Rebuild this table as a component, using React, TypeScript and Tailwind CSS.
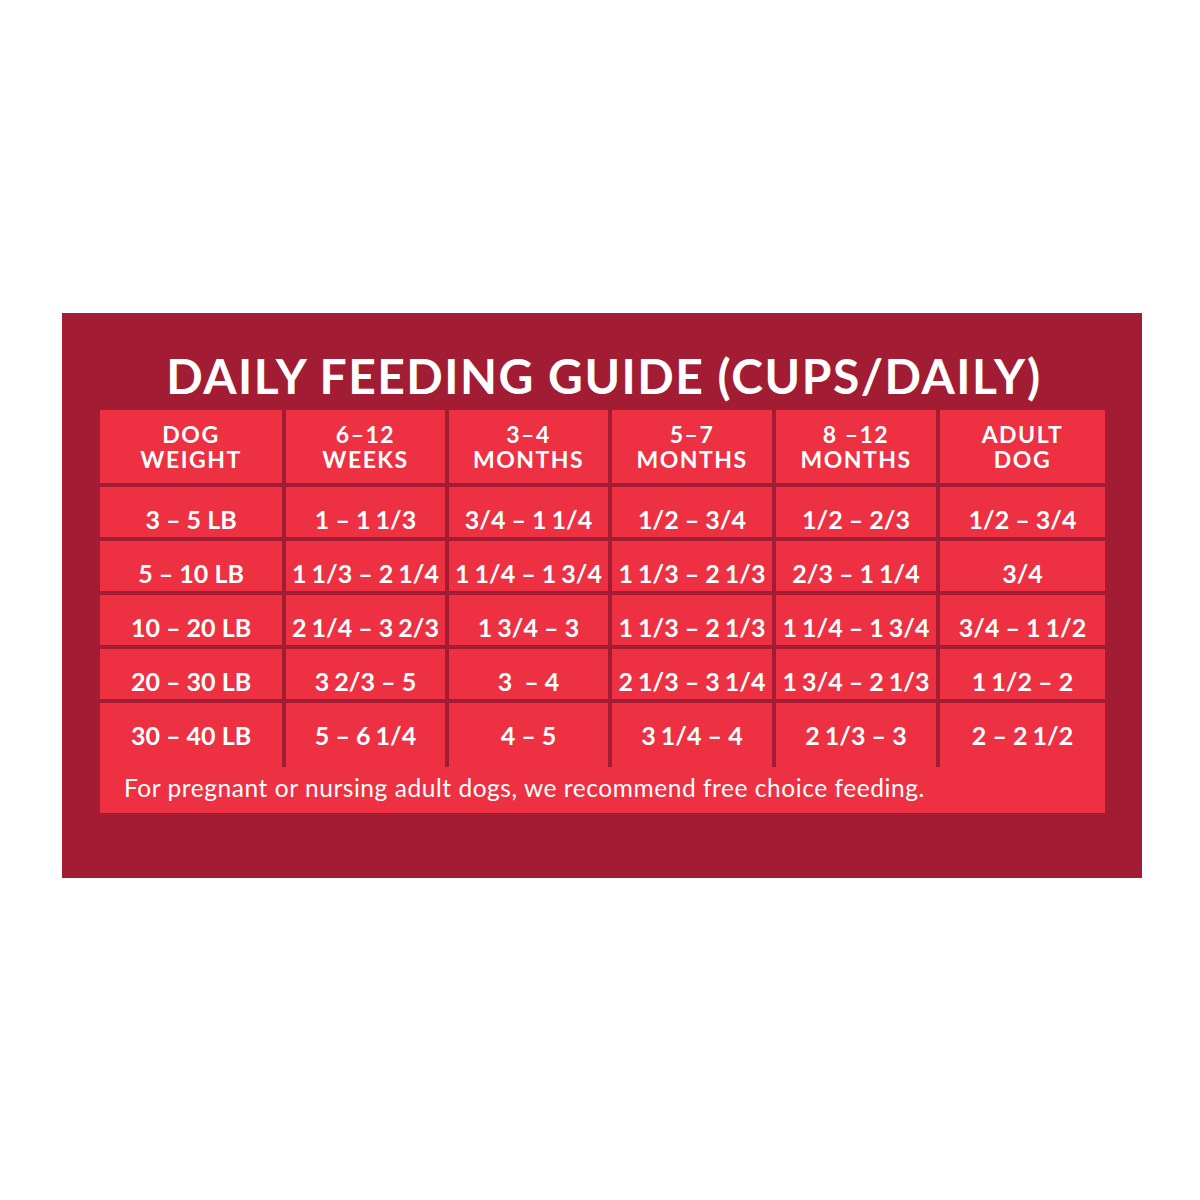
import React from "react";

const headers = [
  ["DOG", "WEIGHT"],
  ["6–12", "WEEKS"],
  ["3–4", "MONTHS"],
  ["5–7", "MONTHS"],
  ["8 –12", "MONTHS"],
  ["ADULT", "DOG"],
];

const rows = [
  ["3 – 5 LB", "1 – 1 1/3", "3/4 – 1 1/4", "1/2 – 3/4", "1/2 – 2/3", "1/2 – 3/4"],
  ["5 – 10 LB", "1 1/3 – 2 1/4", "1 1/4 – 1 3/4", "1 1/3 – 2 1/3", "2/3 – 1 1/4", "3/4"],
  ["10 – 20 LB", "2 1/4 – 3 2/3", "1 3/4 – 3", "1 1/3 – 2 1/3", "1 1/4 – 1 3/4", "3/4 – 1 1/2"],
  ["20 – 30 LB", "3 2/3 – 5", "3\u00a0\u00a0– 4", "2 1/3 – 3 1/4", "1 3/4 – 2 1/3", "1 1/2 – 2"],
  ["30 – 40 LB", "5 – 6 1/4", "4 – 5", "3 1/4 – 4", "2 1/3 – 3", "2 – 2 1/2"],
];

function Value({ text }: { text: string }) {
  const tokens = text.split(" ");
  const out: React.ReactNode[] = [];
  tokens.forEach((t, i) => {
    const prev = tokens[i - 1];
    const tight = i > 0 && /^\d+$/.test(prev) && /^\d\/\d$/.test(t);
    if (i === 0) out.push(<span key={i}>{t}</span>);
    else if (tight)
      out.push(
        <span key={i} className="ml-[5px]">
          {t}
        </span>
      );
    else out.push(<span key={i}>{" " + t}</span>);
  });
  return <>{out}</>;
}

export default function App() {
  return (
    <div
      className="w-[1200px] h-[1200px] bg-white pt-[313px] pl-[62px]"
      style={{ fontFamily: "Lato, 'Open Sans', sans-serif" }}
    >
      <div className="w-[1080px] h-[565px] bg-[#a21c34] pt-[39px] px-[38px]">
        <div className="h-[48px] leading-[48px] text-center text-white font-bold text-[48px] tracking-[1.5px] mb-[10px] pl-[4px] whitespace-nowrap">
          DAILY FEEDING GUIDE (CUPS/DAILY)
        </div>
        <div className="grid grid-cols-[182px_159px_159px_160px_160px_165px] gap-[4px]">
          {headers.map((h, i) => (
            <div
              key={i}
              className="h-[73px] bg-[#ed3042] flex flex-col items-center justify-center text-white font-bold text-[23px] leading-[25px] tracking-[1.5px]"
            >
              <div>{h[0]}</div>
              <div>{h[1]}</div>
            </div>
          ))}
          {rows.map((r, ri) =>
            r.map((c, ci) => (
              <div
                key={`${ri}-${ci}`}
                className={`${ri === rows.length - 1 ? "h-[64px]" : "h-[50px]"} bg-[#ed3042] pt-[17px] text-center text-white font-bold text-[25px] leading-[30px] whitespace-pre`}
              >
                <Value text={c} />
              </div>
            ))
          )}
        </div>
        <div className="w-[1005px] h-[46px] bg-[#ed3042] pl-[24px] text-white text-[24.5px] leading-[42px] tracking-[0.55px] whitespace-nowrap">
          For pregnant or nursing adult dogs, we recommend free choice feeding.
        </div>
      </div>
    </div>
  );
}
